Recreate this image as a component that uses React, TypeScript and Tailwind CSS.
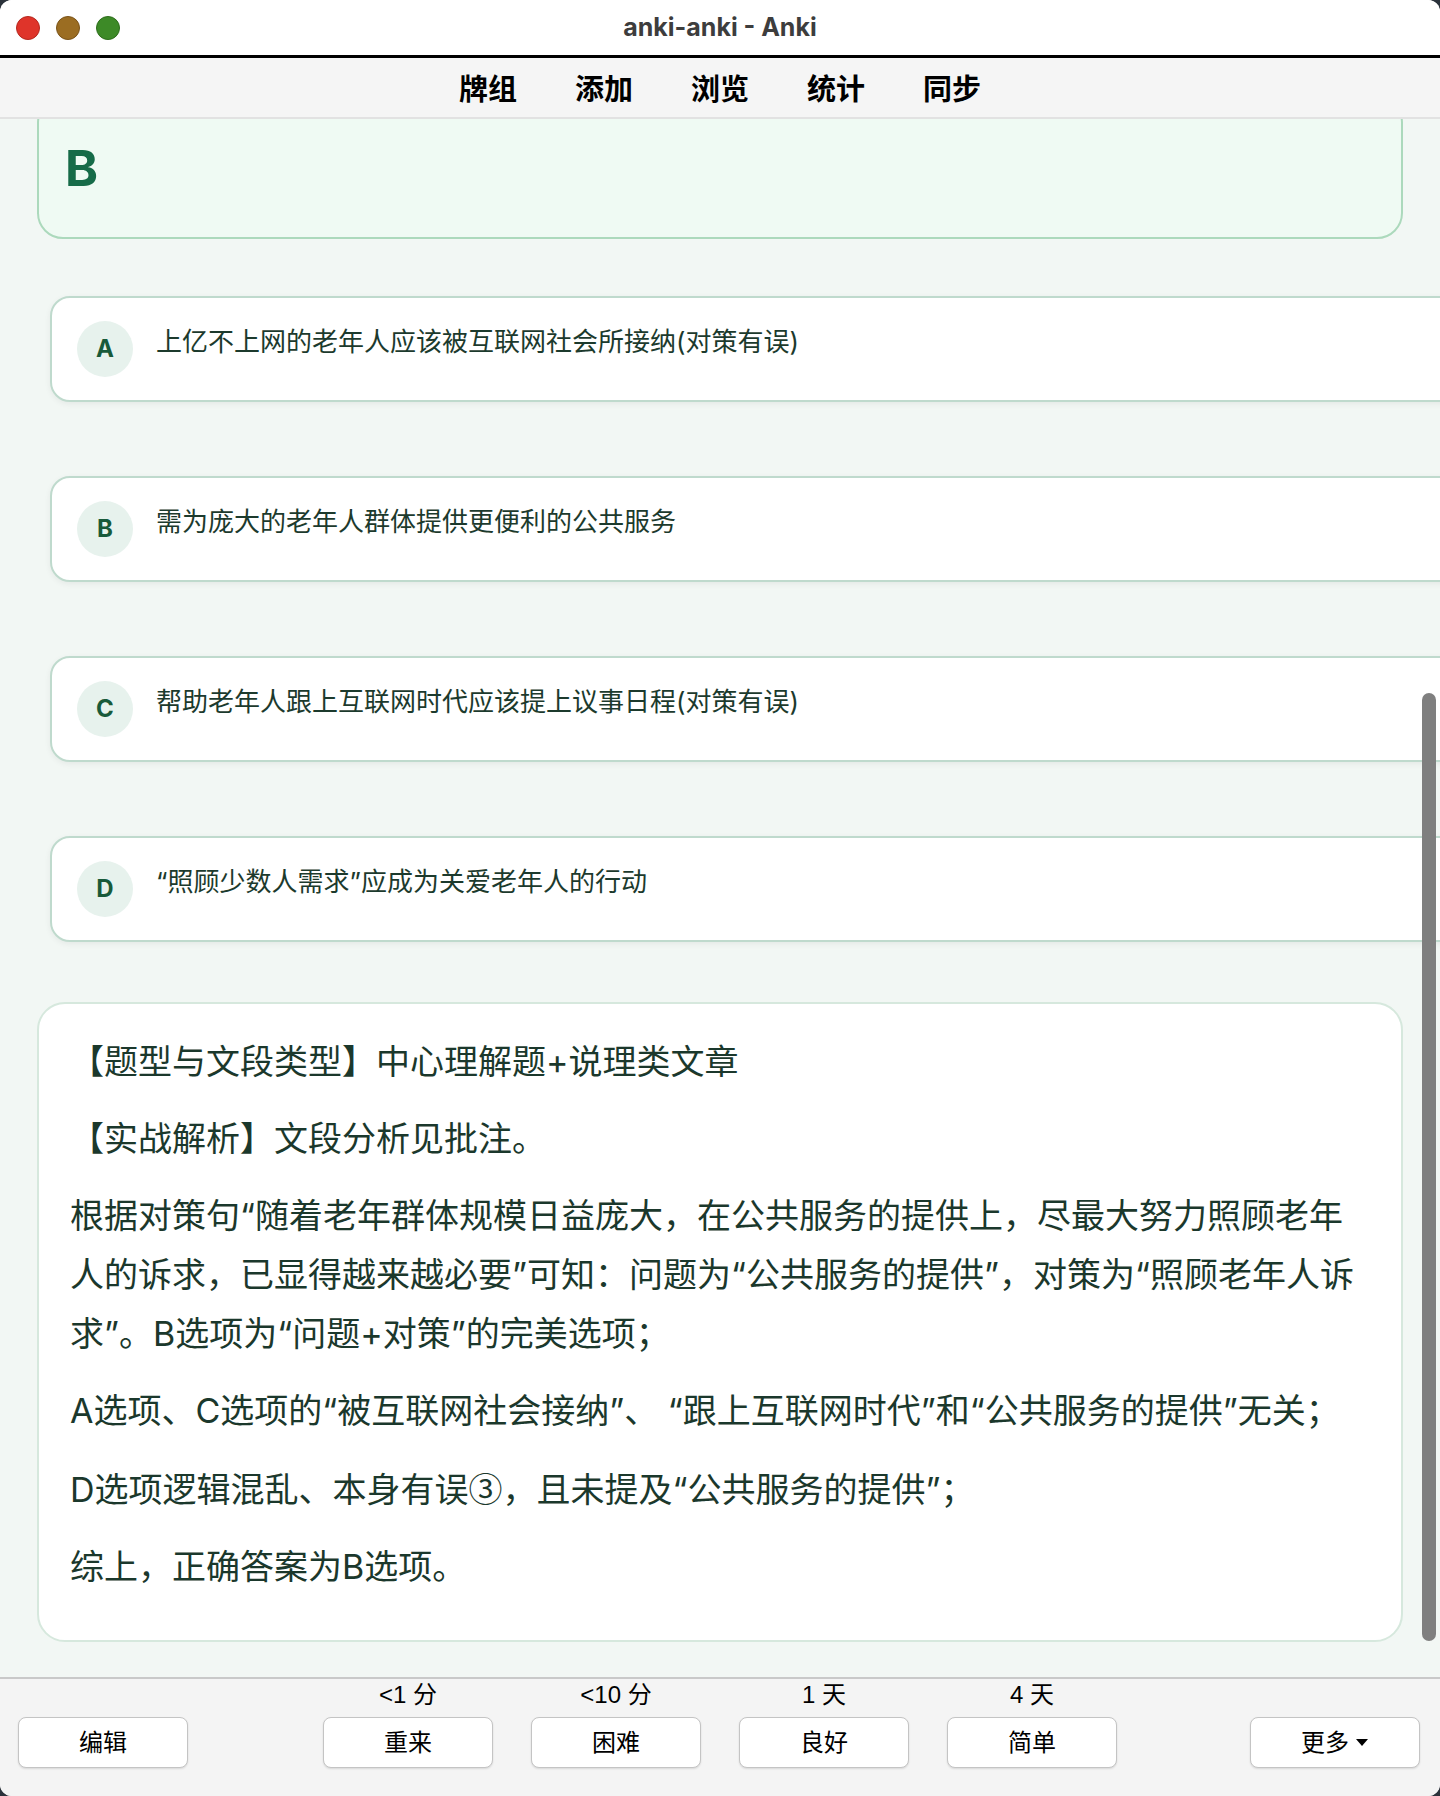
import React from "react";

const options = [
  { k: "A", t: "上亿不上网的老年人应该被互联网社会所接纳(对策有误)" },
  { k: "B", t: "需为庞大的老年人群体提供更便利的公共服务" },
  { k: "C", t: "帮助老年人跟上互联网时代应该提上议事日程(对策有误)" },
  { k: "D", t: "“照顾少数人需求”应成为关爱老年人的行动" },
];

const ease = [
  { label: "<1 分", btn: "重来" },
  { label: "<10 分", btn: "困难" },
  { label: "1 天", btn: "良好" },
  { label: "4 天", btn: "简单" },
];

const cjk = { fontFamily: '"Inter", "Noto Sans CJK SC", sans-serif' };
const sys = { fontFamily: '"Liberation Sans", "Noto Sans CJK SC", sans-serif' };

function Btn({ children }: { children: React.ReactNode }) {
  return (
    <div className="w-[170px] h-[51px] rounded-[8px] bg-white border border-[#c4c4c4] shadow-[0_1px_2px_rgba(0,0,0,0.12)] flex items-center justify-center text-[24px] text-black">
      {children}
    </div>
  );
}

export default function App() {
  return (
    <div className="w-[1440px] h-[1796px] bg-[#2b323b] overflow-hidden">
      <div className="w-full h-full rounded-[12px] overflow-hidden flex flex-col bg-white">
        {/* Title bar */}
        <div className="relative h-[55px] shrink-0 bg-white flex items-center justify-center">
          <div className="absolute left-[16px] top-[16px] flex gap-[16px]">
            <span className="w-[24px] h-[24px] rounded-full bg-[#df342a] border border-[#b5281e]" />
            <span className="w-[24px] h-[24px] rounded-full bg-[#9b6d22] border border-[#7a5318]" />
            <span className="w-[24px] h-[24px] rounded-full bg-[#3d8a27] border border-[#2d6d1b]" />
          </div>
          <span className="text-[25px] font-bold text-[#3d3d3d]" style={{ fontFamily: '"Inter", sans-serif' }}>
            anki-anki - Anki
          </span>
        </div>
        <div className="h-[3px] shrink-0 bg-black" />
        {/* Toolbar */}
        <div
          className="h-[61px] shrink-0 bg-[#f5f5f5] border-b-2 border-[#e2e2e2] flex items-center justify-center gap-[58px] text-[29px] font-bold text-black"
          style={{ fontFamily: '"Noto Sans CJK SC", sans-serif' }}
        >
          <span>牌组</span>
          <span>添加</span>
          <span>浏览</span>
          <span>统计</span>
          <span>同步</span>
        </div>

        {/* Content */}
        <div className="relative flex-1 overflow-hidden bg-[#f2f7f4]" style={cjk}>
          <div className="flex flex-col items-start">
            <div className="-mt-[22px] ml-[37px] w-[1366px] rounded-[26px] border-2 border-[#acd9bc] bg-[#effaf3] pl-[26px] py-[44px]">
              <div className="text-[50px] leading-[50px] font-bold text-[#166b48]" style={{ fontFamily: '"Inter", sans-serif' }}>
                B
              </div>
            </div>

            <div className="mt-[57px] ml-[50px] flex flex-col gap-[74px]">
              {options.map((o) => (
                <div
                  key={o.k}
                  className="w-[1420px] h-[106px] rounded-[20px] border-2 border-[#bfdacd] bg-white shadow-[0_2px_6px_rgba(0,0,0,0.06)] flex items-center pl-[25px]"
                >
                  <div className="w-[56px] h-[56px] shrink-0 rounded-full bg-[#e7f2ed] flex items-center justify-center text-[24px] font-bold text-[#185a3a]" style={{ fontFamily: '"Inter", sans-serif' }}>
                    {o.k}
                  </div>
                  <div className="ml-[23px] mb-[15px] text-[26px] leading-[36px] text-[#1c3a2d]">{o.t}</div>
                </div>
              ))}
            </div>

            <div className="mt-[60px] ml-[37px] w-[1366px] rounded-[28px] border-2 border-[#d6e8dd] bg-white pl-[31px] pr-[20px] pt-[28px] pb-[26px] text-[34px] leading-[59px] text-[#1b382c] whitespace-nowrap">
              <p className="mb-[18px]">【题型与文段类型】中心理解题+说理类文章</p>
              <p className="mb-[18px]">【实战解析】文段分析见批注。</p>
              <p className="mb-[18px]">
                根据对策句“随着老年群体规模日益庞大，在公共服务的提供上，尽最大努力照顾老年
                <br />
                人的诉求，已显得越来越必要”可知：问题为“公共服务的提供”，对策为“照顾老年人诉
                <br />
                求”。B选项为“问题+对策”的完美选项；
              </p>
              <p className="mb-[18px]">A选项、C选项的“被互联网社会接纳”、 “跟上互联网时代”和“公共服务的提供”无关；</p>
              <p className="mb-[18px]">
                D选项逻辑混乱、本身有误
                <span className="text-[34px]" style={{ fontFamily: '"Noto Sans CJK SC", sans-serif' }}>③</span>
                ，且未提及“公共服务的提供”；
              </p>
              <p className="mb-[18px]">综上，正确答案为B选项。</p>
            </div>
          </div>

          {/* scrollbar */}
          <div className="absolute right-[4px] top-[574px] w-[14px] h-[948px] rounded-full bg-[#7f7f7f]" />
        </div>

        {/* Bottom bar */}
        <div className="h-[119px] shrink-0 bg-[#f4f4f4] border-t-2 border-[#c9c9c9] pt-[2px] grid grid-cols-[1fr_auto_1fr] items-start" style={sys}>
          <div className="pl-[18px] pt-[36px]">
            <Btn>编辑</Btn>
          </div>
          <div className="flex gap-[38px]">
            {ease.map((e) => (
              <div key={e.btn} className="flex flex-col items-center">
                <div className="h-[28px] leading-[28px] text-[24px] text-black">{e.label}</div>
                <div className="mt-[8px]">
                  <Btn>{e.btn}</Btn>
                </div>
              </div>
            ))}
          </div>
          <div className="flex justify-end pr-[20px] pt-[36px]">
            <Btn>
              <span>更多</span>
              <svg width="14" height="9" viewBox="0 0 14 9" className="ml-[6px]">
                <path d="M1 1 L13 1 L7 8 Z" fill="black" />
              </svg>
            </Btn>
          </div>
        </div>
      </div>
    </div>
  );
}
